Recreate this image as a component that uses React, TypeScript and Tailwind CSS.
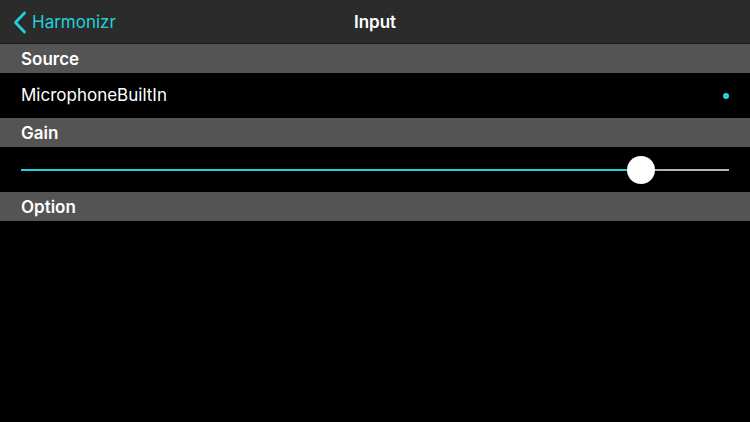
const font = { fontFamily: 'Inter, "Noto Sans", sans-serif' };

function SectionHeader({ title }: { title: string }) {
  return (
    <div className="flex h-[29px] items-center bg-[#545454] px-[21px] pt-[3px] text-[17px] font-semibold text-white">
      {title}
    </div>
  );
}

export default function App() {
  const value = 0.876;

  return (
    <div className="h-[422px] w-[750px] overflow-hidden bg-black text-white" style={font}>
      {/* nav bar */}
      <div className="relative flex h-[44px] items-center border-b border-[#1a1a1a] bg-[#2b2b2b] pt-[3px]">
        <button type="button" className="flex items-center gap-[5px] pl-[13px] text-[17px] text-[#22d0dc]">
          <svg width="14" height="23" viewBox="0 0 14 23" fill="none" className="-mt-[1px]">
            <path d="M11.5 2 L2.5 11.5 L11.5 21" stroke="#22d0dc" strokeWidth="2.8" strokeLinecap="round" strokeLinejoin="round" />
          </svg>
          <span>Harmonizr</span>
        </button>
        <div className="pointer-events-none absolute inset-0 flex items-center justify-center pt-[3px] text-[17px] font-semibold">
          Input
        </div>
      </div>

      <SectionHeader title="Source" />
      <div className="flex h-[45px] items-center justify-between px-[21px] pt-[1px] text-[17px]">
        <span>MicrophoneBuiltIn</span>
        <span className="h-[6px] w-[6px] rounded-full bg-[#22d8e4]" />
      </div>

      <SectionHeader title="Gain" />
      <div className="flex h-[45px] items-center px-[21px]">
        <div className="relative h-[2px] w-full bg-[#b4b4b4]">
          <div className="h-full bg-[#22d0dc]" style={{ width: `${value * 100}%` }} />
          <div
            className="absolute top-1/2 h-[28px] w-[28px] -translate-x-1/2 -translate-y-1/2 rounded-full bg-white shadow"
            style={{ left: `${value * 100}%` }}
          />
        </div>
      </div>

      <SectionHeader title="Option" />
    </div>
  );
}
